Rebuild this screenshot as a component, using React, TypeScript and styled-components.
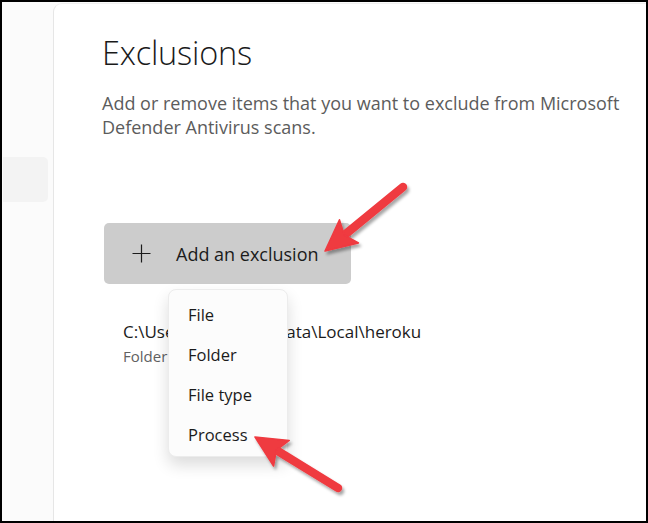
import React from 'react'
import styled, { createGlobalStyle } from 'styled-components'

const GlobalStyle = createGlobalStyle`
  html, body {
    margin: 0;
    padding: 0;
    background: #ffffff;
  }
  body {
    font-family: 'Open Sans', 'Noto Sans', sans-serif;
    color: #1b1b1b;
  }
`

const menuItems = ['File', 'Folder', 'File type', 'Process']

export default function App() {
  return (
    <>
      <GlobalStyle />
      <Frame>
        <Sidebar>
          <NavItem />
        </Sidebar>
        <Panel>
          <Title>Exclusions</Title>
          <Description>
            Add or remove items that you want to exclude from Microsoft Defender Antivirus scans.
          </Description>
          <AddArea>
            <AddButton>
              <PlusIcon />
              Add an exclusion
            </AddButton>
            <Flyout>
              {menuItems.map((item) => (
                <FlyoutItem key={item}>{item}</FlyoutItem>
              ))}
            </Flyout>
          </AddArea>
          <ExclusionRow>
            <ExclusionPath>C:\Users\jonat\AppData\Local\heroku</ExclusionPath>
            <ExclusionType>Folder</ExclusionType>
          </ExclusionRow>
        </Panel>
        <Annotations />
      </Frame>
    </>
  )
}

const PlusIcon = () => (
  <svg width="19" height="19" viewBox="0 0 19 19" fill="none">
    <path d="M9.5 0.5v18M0.5 9.5h18" stroke="#1b1b1b" strokeWidth="1.2" />
  </svg>
)

const Arrow = ({ tail, tip }: { tail: [number, number]; tip: [number, number] }) => {
  const dx = tip[0] - tail[0]
  const dy = tip[1] - tail[1]
  const len = Math.hypot(dx, dy)
  const ux = dx / len
  const uy = dy / len
  const px = -uy
  const py = ux
  const headLen = 31
  const half = 15
  const bx = tip[0] - ux * headLen
  const by = tip[1] - uy * headLen
  const nx = tip[0] - ux * (headLen - 6)
  const ny = tip[1] - uy * (headLen - 6)
  const head = [
    `M${tip[0]} ${tip[1]}`,
    `L${bx + px * half} ${by + py * half}`,
    `L${nx} ${ny}`,
    `L${bx - px * half} ${by - py * half}`,
    'Z',
  ].join(' ')
  return (
    <g filter="url(#arrowShadow)">
      <line
        x1={tail[0]}
        y1={tail[1]}
        x2={nx}
        y2={ny}
        stroke="#ef3a40"
        strokeWidth="8.5"
        strokeLinecap="round"
      />
      <path d={head} fill="#ef3a40" stroke="#ef3a40" strokeWidth="1.5" strokeLinejoin="round" />
    </g>
  )
}

const Annotations = () => (
  <Overlay width="648" height="523" viewBox="0 0 648 523">
    <defs>
      <filter id="arrowShadow" x="-20%" y="-20%" width="140%" height="140%">
        <feDropShadow dx="2" dy="3" stdDeviation="1.6" floodColor="#000" floodOpacity="0.35" />
      </filter>
    </defs>
    <Arrow tail={[403, 187]} tip={[325, 251]} />
    <Arrow tail={[338, 488]} tip={[255, 437]} />
  </Overlay>
)

const Frame = styled.div`
  position: relative;
  box-sizing: border-box;
  width: 648px;
  height: 523px;
  border: 2px solid #000000;
  display: flex;
  background: #fbfbfb;
  overflow: hidden;
`

const Sidebar = styled.div`
  width: 51px;
  flex-shrink: 0;
  padding-top: 155px;
  padding-left: 1px;
  box-sizing: border-box;
`

const NavItem = styled.div`
  width: 45px;
  height: 45px;
  background: #f3f3f3;
  border-radius: 0 5px 5px 0;
`

const Panel = styled.div`
  flex: 1;
  margin-top: 1px;
  padding: 29px 0 0 48px;
  background: #ffffff;
  border-left: 1px solid #e6e6e6;
  border-top: 1px solid #f0f0f0;
  border-top-left-radius: 9px;
  display: flex;
  flex-direction: column;
`

const Title = styled.h1`
  margin: 0;
  font-size: 32.5px;
  font-weight: 300;
  line-height: 40px;
  letter-spacing: -0.2px;
  color: #1a1a1a;
`

const Description = styled.p`
  margin: 18px 0 0;
  width: 540px;
  font-size: 18px;
  line-height: 24px;
  color: #5c5c5c;
`

const AddArea = styled.div`
  position: relative;
  margin-top: 84px;
  align-self: flex-start;
`

const AddButton = styled.div`
  display: flex;
  align-items: center;
  gap: 25px;
  box-sizing: border-box;
  width: 247px;
  height: 61px;
  margin-left: 2px;
  padding-left: 28px;
  background: #cccccc;
  border-radius: 5px;
  font-size: 18px;
  color: #1b1b1b;
`

const Flyout = styled.div`
  position: absolute;
  left: 66px;
  top: 66px;
  width: 120px;
  box-sizing: border-box;
  padding: 4px 0 2px;
  background: #fcfcfc;
  border: 1px solid #ececec;
  border-radius: 8px;
  box-shadow: 0 8px 16px rgba(0, 0, 0, 0.14);
  z-index: 2;
`

const FlyoutItem = styled.div`
  height: 40px;
  display: flex;
  align-items: center;
  padding-left: 19px;
  font-size: 16.5px;
  color: #1b1b1b;
`

const ExclusionRow = styled.div`
  margin-top: 37px;
  padding-left: 21px;
  display: flex;
  flex-direction: column;
  gap: 3px;
`

const ExclusionPath = styled.div`
  font-size: 17px;
  line-height: 22px;
  color: #1b1b1b;
  white-space: nowrap;
`

const ExclusionType = styled.div`
  font-size: 15px;
  line-height: 20px;
  color: #616161;
`

const Overlay = styled.svg`
  position: absolute;
  left: -2px;
  top: -2px;
  pointer-events: none;
  z-index: 3;
`
